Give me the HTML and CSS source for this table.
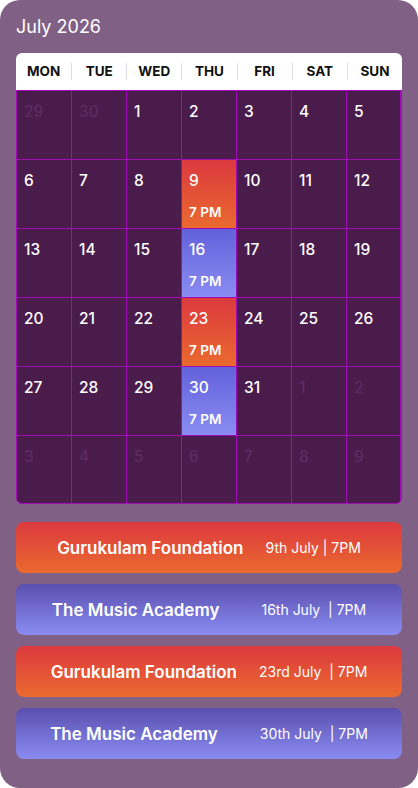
FILE: index.html
```html
<!DOCTYPE html>
<html lang="en">
<head>
  <meta charset="UTF-8">
  <meta name="viewport" content="width=device-width, initial-scale=1.0">
  <title>Event Calendar</title>
  <link rel="stylesheet" href="styles.css">
</head>
<body>
  <div class="panel">
    <h2 class="month">July 2026</h2>

    <div class="calendar">
      <div class="weekdays">
        <span>MON</span><span>TUE</span><span>WED</span><span>THU</span><span>FRI</span><span>SAT</span><span>SUN</span>
      </div>
      <div class="days">
        <div class="day muted">29</div>
        <div class="day muted">30</div>
        <div class="day">1</div>
        <div class="day">2</div>
        <div class="day">3</div>
        <div class="day">4</div>
        <div class="day">5</div>

        <div class="day">6</div>
        <div class="day">7</div>
        <div class="day">8</div>
        <div class="day event orange">9<span class="time">7 PM</span></div>
        <div class="day">10</div>
        <div class="day">11</div>
        <div class="day">12</div>

        <div class="day">13</div>
        <div class="day">14</div>
        <div class="day">15</div>
        <div class="day event blue">16<span class="time">7 PM</span></div>
        <div class="day">17</div>
        <div class="day">18</div>
        <div class="day">19</div>

        <div class="day">20</div>
        <div class="day">21</div>
        <div class="day">22</div>
        <div class="day event orange">23<span class="time">7 PM</span></div>
        <div class="day">24</div>
        <div class="day">25</div>
        <div class="day">26</div>

        <div class="day">27</div>
        <div class="day">28</div>
        <div class="day">29</div>
        <div class="day event blue">30<span class="time">7 PM</span></div>
        <div class="day">31</div>
        <div class="day muted">1</div>
        <div class="day muted">2</div>

        <div class="day muted">3</div>
        <div class="day muted">4</div>
        <div class="day muted">5</div>
        <div class="day muted">6</div>
        <div class="day muted">7</div>
        <div class="day muted">8</div>
        <div class="day muted">9</div>
      </div>
    </div>

    <div class="events">
      <div class="event-card orange">
        <span class="name">Gurukulam Foundation</span>
        <span class="when">9th July | 7PM</span>
      </div>
      <div class="event-card blue">
        <span class="name">The Music Academy</span>
        <span class="when">16th July &nbsp;| 7PM</span>
      </div>
      <div class="event-card orange">
        <span class="name">Gurukulam Foundation</span>
        <span class="when">23rd July &nbsp;| 7PM</span>
      </div>
      <div class="event-card blue">
        <span class="name">The Music Academy</span>
        <span class="when">30th July &nbsp;| 7PM</span>
      </div>
    </div>
  </div>
</body>
</html>
```

FILE: styles.css
```css
body {
  margin: 0;
  background: #fff;
  font-family: Inter, "Open Sans", sans-serif;
}
.panel {
  background: #806084;
  border-radius: 20px;
  height: 788px;
  box-sizing: border-box;
  padding: 16px 16px 0 16px;
}
.month {
  margin: 0 0 15px;
  color: #fff;
  font-size: 18px;
  font-weight: 400;
  line-height: 22px;
}
.weekdays {
  display: grid;
  grid-template-columns: repeat(7, 1fr);
  background: #fff;
  height: 37px;
  align-items: center;
  border-radius: 6px 6px 0 0;
}
.weekdays span {
  text-align: center;
  font-size: 13.5px;
  font-weight: 700;
  color: #111;
  border-left: 1px solid #dcdce6;
  line-height: 17px;
}
.weekdays span:first-child {
  border-left: none;
}
/* the magenta grid lines are the container background showing through the gaps */
.days {
  display: grid;
  grid-template-columns: repeat(6, 54px) 53px;
  grid-template-rows: repeat(5, 68px) 67px;
  gap: 1px;
  background: #a20cb8;
  border: 1px solid #a20cb8;
  border-radius: 0 0 6px 6px;
  overflow: hidden;
}
.day {
  display: flex;
  flex-direction: column;
  justify-content: space-between;
  padding: 11px 7px 8px;
  background: #4a1c4c;
  color: #fff;
  font-size: 15.5px;
  font-weight: 500;
}
.day.muted {
  color: #5e2a62;
}
.day .time {
  font-size: 13.5px;
  font-weight: 600;
}
.orange {
  background: linear-gradient(#dc393e, #ea6a2f);
}
.blue {
  background: linear-gradient(#6361db, #8a8cf2);
}
.events {
  display: flex;
  flex-direction: column;
  gap: 11px;
  margin-top: 18px;
}
.event-card {
  height: 51px;
  border-radius: 8px;
  display: flex;
  align-items: center;
  justify-content: center;
  gap: 22px;
  color: #fff;
}
.event-card.blue {
  background: linear-gradient(#5a4fae, #8a8cf2);
  gap: 42px;
}
.event-card .name {
  font-size: 17px;
  font-weight: 600;
}
.event-card .when {
  font-size: 14px;
  font-weight: 400;
}
```
